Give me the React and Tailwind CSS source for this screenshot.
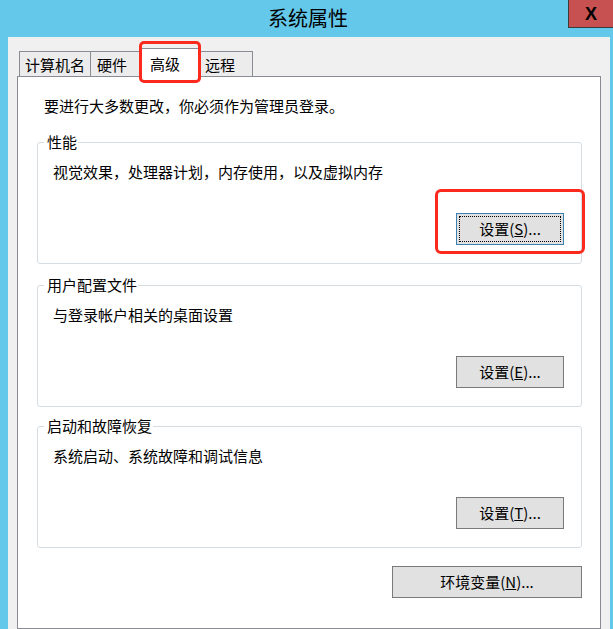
import React from "react";

const font = { fontFamily: '"Noto Sans CJK SC", "Liberation Sans", sans-serif' };

function Btn({ children, focused = false, className = "" }) {
  return (
    <div
      className={
        "h-[32px] flex items-center justify-center bg-[#e1e1e1] text-[15px] leading-[20px] text-black border " +
        (focused ? "border-[#3c7fb1] p-[2px]" : "border-[#7a7a7a] ") +
        className
      }
    >
      {focused ? (
        <div className="w-full h-full border border-dotted border-black flex items-center justify-center">
          {children}
        </div>
      ) : (
        children
      )}
    </div>
  );
}

function Group({ title, desc, btn, focused = false, className = "" }) {
  return (
    <fieldset
      className={
        "ml-[19px] mr-[18px] border border-[#d5dde3] rounded-[3px] px-0 pt-0 pb-[18px] " + className
      }
    >
      <legend className="ml-[6px] pl-[3px] pr-px text-[15px] leading-[20px] text-black">{title}</legend>
      <div className="pl-[15px] pt-[10px] text-[15px] leading-[20px] text-black">{desc}</div>
      <div className="flex justify-end pr-[17px] mt-[31px]">
        <div className="relative w-[108px]">
          <Btn focused={focused}>{btn}</Btn>
          {focused && (
            <div className="absolute -left-[21px] -right-[21px] -top-[24px] -bottom-[9px] border-[3px] border-[#fb2a1d] rounded-[6px] pointer-events-none" />
          )}
        </div>
      </div>
    </fieldset>
  );
}

export default function App() {
  return (
    <div className="w-[613px] h-[629px] overflow-hidden bg-[#64c8ea] flex flex-col" style={font}>
      {/* title bar */}
      <div className="h-[37px] flex items-start shrink-0">
        <div className="flex-1 pl-[48px] text-center text-[20px] leading-[36px] text-black">系统属性</div>
        <div className="w-[45px] h-[28px] bg-[#c75050] border-l border-b border-[#3b3b3b] flex items-center justify-center">
          <span className="text-[18px] font-bold text-black leading-none" style={{ fontFamily: '"Liberation Sans", sans-serif' }}>
            X
          </span>
        </div>
      </div>

      {/* body */}
      <div className="flex-1 ml-[8px] mr-[3px] bg-[#f0f0f0] pt-[11px] px-[9px] flex flex-col">
        {/* tabs */}
        <div className="h-[28px] flex items-end ml-[2px] text-[15px] text-black">
          <div className="w-[72px] h-[25px] border-l border-t border-r border-[#898c95] bg-[#ececec] pl-[5px] flex items-center leading-none">
            计算机名
          </div>
          <div className="w-[51px] h-[25px] -ml-px border-l border-t border-r border-[#898c95] bg-[#ececec] pl-[6px] flex items-center leading-none">
            硬件
          </div>
          <div className="relative z-10 w-[62px] h-[29px] -ml-[2px] -mb-px border-l border-t border-r border-[#898c95] bg-white pl-[10px] flex items-center leading-none">
            高级
            <div className="absolute -left-[1px] -right-[1px] -top-[8px] -bottom-[6px] border-[3px] border-[#fb2a1d] rounded-[5px] pointer-events-none" />
          </div>
          <div className="w-[54px] h-[25px] -ml-[2px] border-l border-t border-r border-[#898c95] bg-[#ececec] pl-[5px] flex items-center leading-none">
            远程
          </div>
        </div>

        {/* panel */}
        <div className="flex-1 border border-[#898c95] bg-white flex flex-col">
          <div className="pl-[26px] pt-[19px] text-[15px] leading-[20px] text-black">
            要进行大多数更改，你必须作为管理员登录。
          </div>
          <Group
            className="mt-[16px]"
            title="性能"
            desc="视觉效果，处理器计划，内存使用，以及虚拟内存"
            btn={<span>设置(<u>S</u>)...</span>}
            focused
          />
          <Group
            className="mt-[11px]"
            title="用户配置文件"
            desc="与登录帐户相关的桌面设置"
            btn={<span>设置(<u>E</u>)...</span>}
          />
          <Group
            className="mt-[9px]"
            title="启动和故障恢复"
            desc="系统启动、系统故障和调试信息"
            btn={<span>设置(<u>T</u>)...</span>}
          />
          <div className="flex justify-end pr-[18px] mt-[18px]">
            <Btn className="w-[190px]">
              <span>环境变量(<u>N</u>)...</span>
            </Btn>
          </div>
        </div>
      </div>
    </div>
  );
}
